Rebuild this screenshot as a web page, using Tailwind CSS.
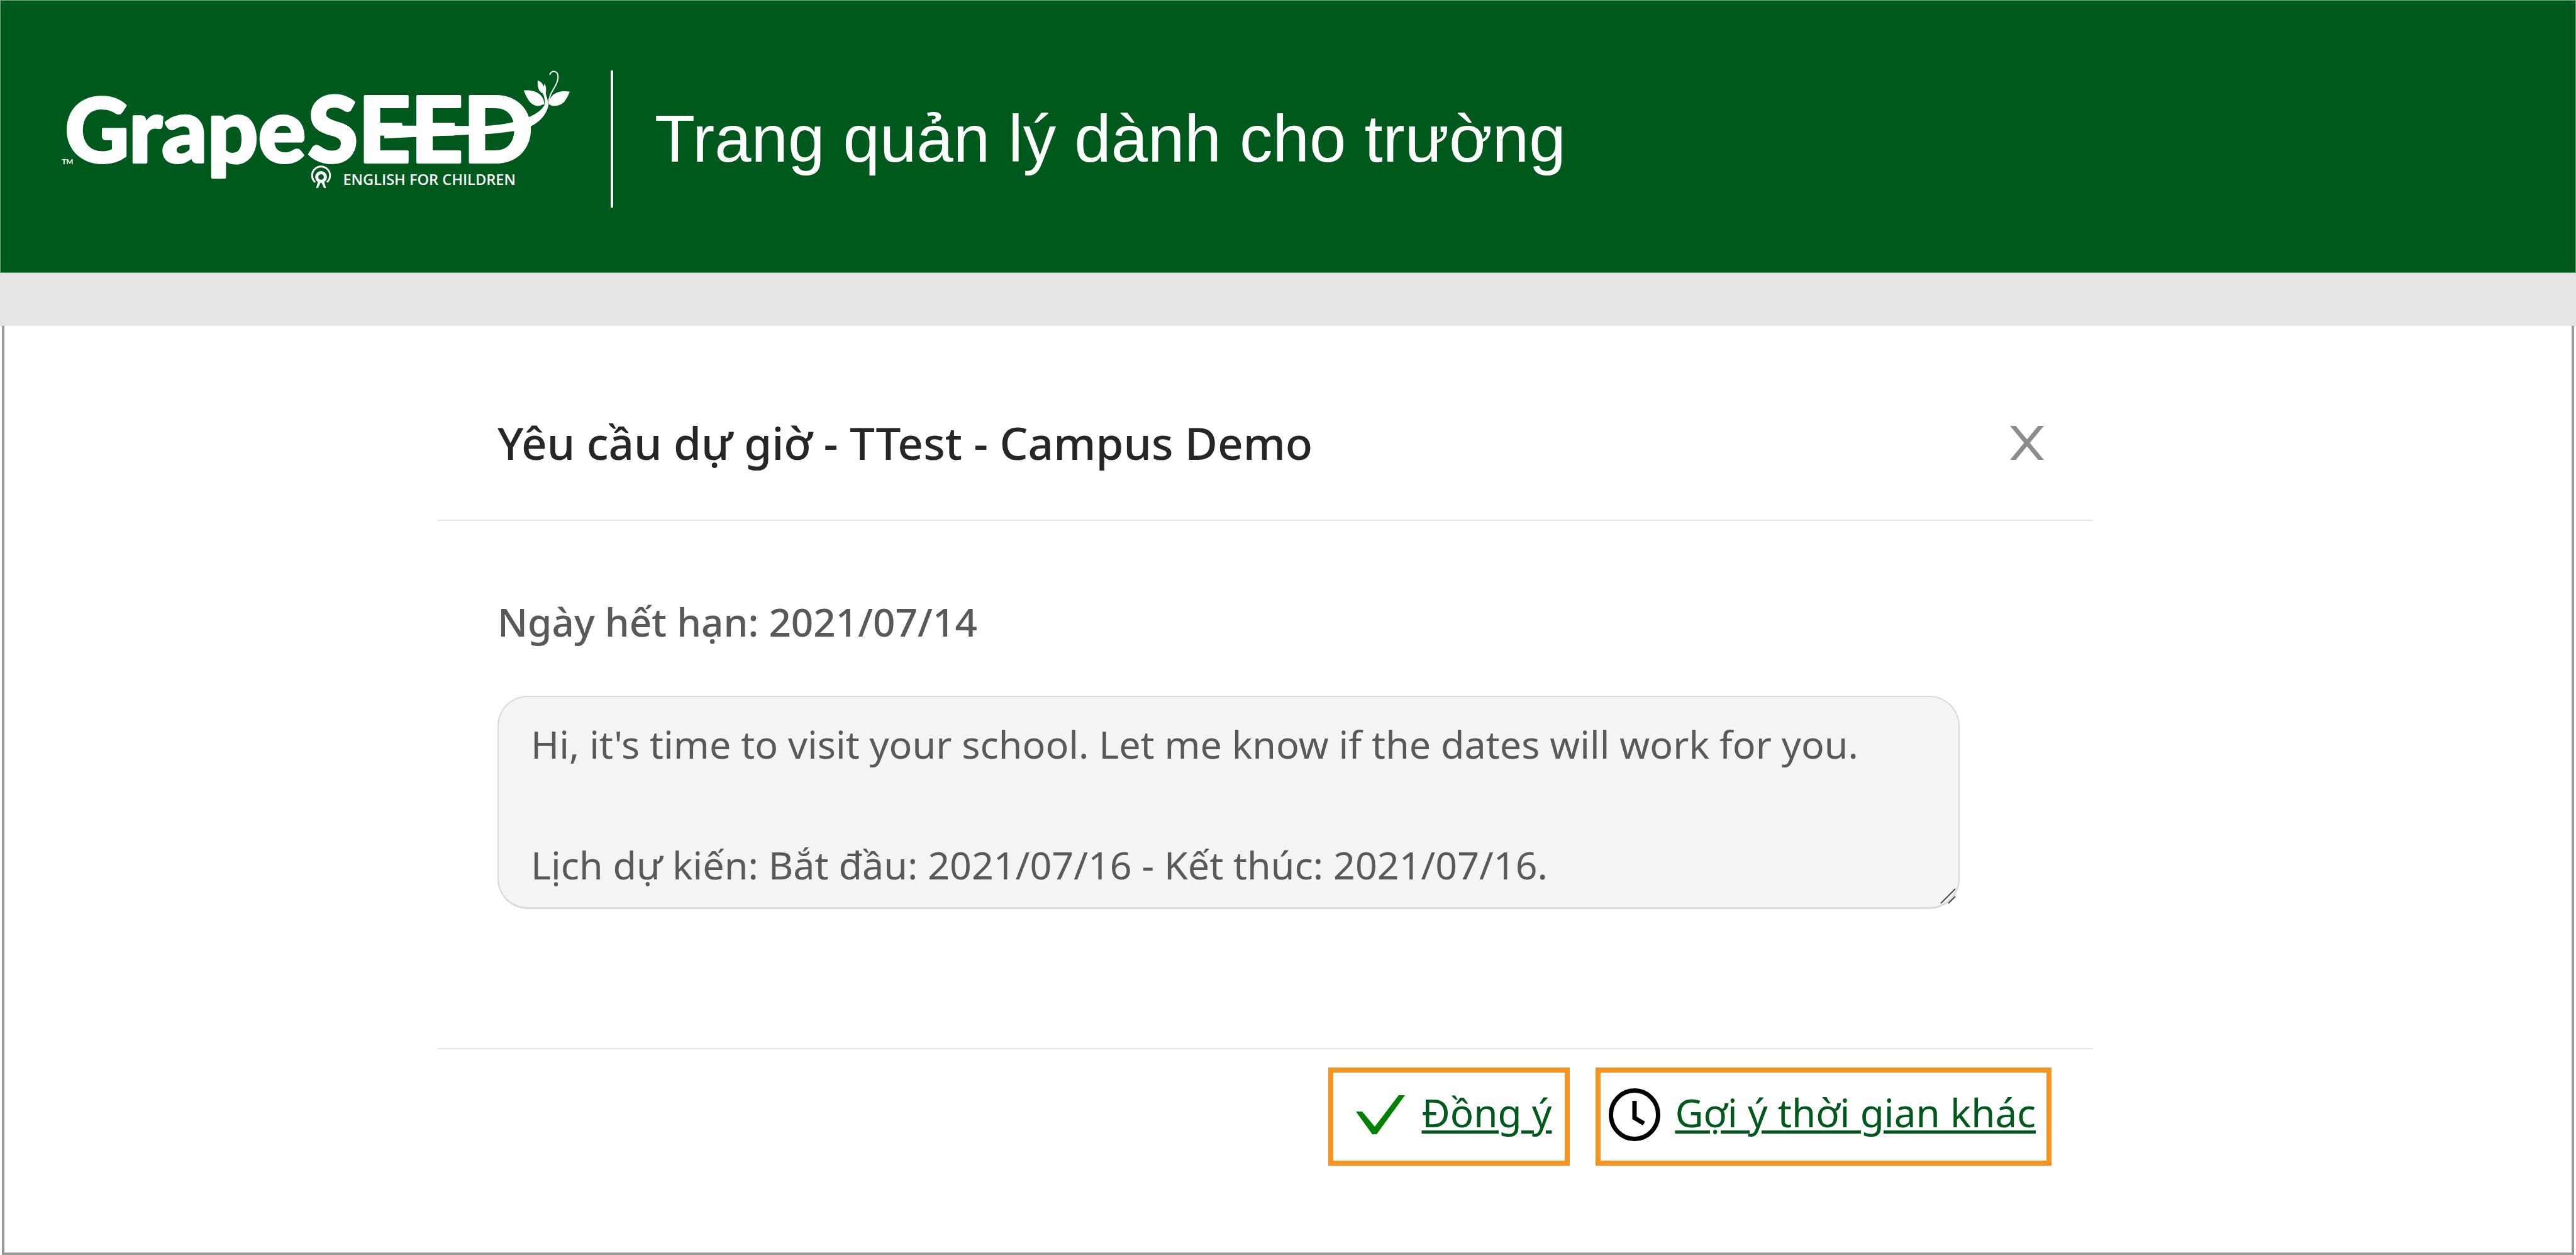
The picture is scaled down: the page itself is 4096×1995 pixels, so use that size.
<!DOCTYPE html>
<html lang="vi">
<head>
<meta charset="utf-8">
<meta name="viewport" content="width=device-width, initial-scale=1">
<title>GrapeSEED - Trang quản lý dành cho trường</title>
<script src="https://cdn.jsdelivr.net/npm/@tailwindcss/browser@4"></script>
</head>
<body class="flex min-h-screen flex-col bg-white font-['Noto_Sans','Open_Sans',sans-serif]">

  <header class="flex h-[434px] items-center border border-[#7aa686] bg-[#00591c] pt-2 pl-[97px] text-white">
    <svg class="h-[226px] w-[826px] shrink-0" viewBox="100 110 840 230" fill="#fff" role="img" aria-label="GrapeSEED English for Children">
      <g font-family="Lato, sans-serif" font-weight="900" stroke="#fff" stroke-width="4" stroke-linejoin="round">
        <text x="105" y="263" font-size="144">Grape</text>
        <text x="498" y="263" font-size="148">SEED</text>
      </g>
      <text x="100" y="266" font-family="Lato, sans-serif" font-weight="700" font-size="12">TM</text>
      <text x="555" y="299" font-family="'Open Sans', sans-serif" font-weight="600" font-size="24">ENGLISH FOR CHILDREN</text>
      <!-- vine -->
      <path d="M621 203 L762 204 Q815 205 850 192 Q876 182 882 168 L888 168 Q884 192 858 205 L852 208 Q815 217 762 218 L622 224 Z"/>
      <path d="M847.500 146.500 C862 145 880 150 881 169 C876 169 876 171.500 870 171.500 C858 171 852 158 847.500 146.500 Z"/>
      <path d="M922 148.500 C905 145 889 152 888 168 C892 173 905 173 913 165 Q919 157 922 148.500 Z"/>
      <path d="M870 130 Q878 133 879.500 140 Q881 138 881 135 Q885 142 883 151 Q886 160 887.500 169 L882 169 Q881.500 156 878 151 Q869 147 870 130 Z"/>
      <path d="M888 167 C888 148 903 140 903 125 C903 114 893 113 889.500 121" fill="none" stroke="#fff" stroke-width="2"/>
      <!-- ribbon -->
      <path d="M509 294 A14.500 14.500 0 1 1 530 294" fill="none" stroke="#fff" stroke-width="3" stroke-linecap="round"/>
      <circle cx="519.500" cy="286.500" r="7" fill="none" stroke="#fff" stroke-width="5"/>
      <path d="M515 292 L511.500 304.500 H514.500 L519.500 294 L524.500 304.500 H527.500 L524 292 Z"/>
    </svg>
    <div class="ml-[47px] h-[218px] w-1 bg-white"></div>
    <h1 class="ml-[66px] font-['Liberation_Sans',Arial,sans-serif] text-[105px] leading-[120px] whitespace-nowrap">Trang quản lý dành cho trường</h1>
  </header>

  <div class="h-[84px] bg-[#e5e5e5]"></div>

  <main class="mx-[3px] flex-1 border-x-4 border-b-4 border-[#999] pr-[761px] pl-[688px]">
    <section aria-labelledby="dialog-title">
      <div class="flex items-center justify-between border-b-2 border-[#e6e6e6] pt-[138px] pr-[78px] pb-[74px] pl-24">
        <h2 id="dialog-title" class="text-[71px] leading-[96px] font-medium text-[#262626]">Yêu cầu dự giờ - TTest - Campus Demo</h2>
        <button type="button" aria-label="Close" class="cursor-pointer">
          <svg class="h-[54px] w-[54px]" viewBox="0 0 54 54" stroke="#8c8c8c" stroke-width="7" fill="none"><path d="M3 -2 L51 56 M51 -2 L3 56"/></svg>
        </button>
      </div>

      <div class="border-b-2 border-[#e6e6e6] pt-[118px] pr-[212px] pb-[221px] pl-24">
        <label for="message" class="block text-[62px] leading-[84px] font-medium text-[#595959]">Ngày hết hạn: 2021/07/14</label>
        <div class="relative mt-[76px]">
          <textarea id="message" rows="3" class="block h-[339px] w-full resize-none overflow-hidden rounded-[48px] border-2 border-b-3 border-[#d9d9d9] bg-[#f4f4f4] pt-[27px] pr-12 pl-[51px] text-[61px] leading-[96px] text-[#595959]">Hi, it's time to visit your school. Let me know if the dates will work for you.

Lịch dự kiến: Bắt đầu: 2021/07/16 - Kết thúc: 2021/07/16.</textarea>
          <svg class="absolute right-[6px] bottom-2 h-[25px] w-[25px]" viewBox="0 0 25 25" stroke="#4d4d4d" stroke-width="2" fill="none"><path d="M1 24 L24 1 M13 24 L24 13"/></svg>
        </div>
      </div>

      <div class="flex justify-end gap-[41px] pt-[29px] pr-[66px] text-[62px] leading-[84px] text-[#00591c]">
        <a href="#accept" class="flex h-[156px] items-center gap-[27px] border-8 border-[#f7931e] pr-[21px] pb-[6px] pl-9">
          <svg class="h-[62px] w-[78px]" viewBox="0 0 78 62" fill="#008000"><path d="M0 26 L10 26 L30 50 L68 0 L78 0 L33 62 L26 62 Z"/></svg>
          <span class="pb-2 whitespace-nowrap underline decoration-[5px] underline-offset-[5px]">Đồng ý</span>
        </a>
        <a href="#suggest" class="flex h-[156px] items-center gap-[23px] border-8 border-[#f7931e] pr-[17px] pb-[6px] pl-[13px]">
          <svg class="h-[84px] w-[82px]" viewBox="0 0 82 84" fill="none" stroke="#000"><ellipse cx="41" cy="42" rx="37.500" ry="38.500" stroke-width="7"/><path d="M41 20 V47 L56 56" stroke-width="7"/></svg>
          <span class="pb-2 whitespace-nowrap underline decoration-[5px] underline-offset-[5px]">Gợi ý thời gian khác</span>
        </a>
      </div>
    </section>
  </main>
</body>
</html>
